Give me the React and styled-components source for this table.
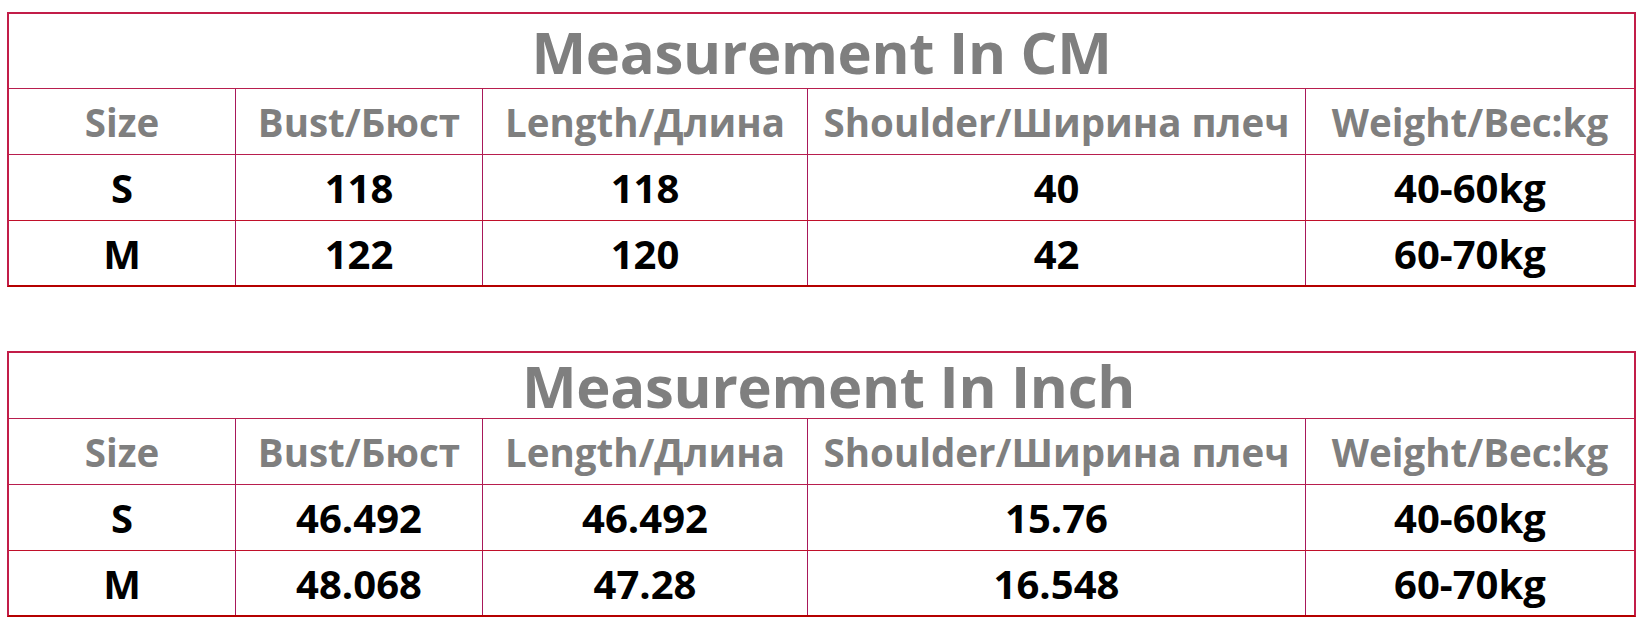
import React from "react";
import styled, { createGlobalStyle } from "styled-components";

const GlobalStyle = createGlobalStyle`
  body {
    margin: 0;
    background: #ffffff;
    font-family: "Open Sans", "Noto Sans", "Liberation Sans", sans-serif;
  }
`;

const Page = styled.div`
  display: flex;
  flex-direction: column;
  gap: 64px;
  padding: 12px 0 0 7px;
  width: 1629px;
`;

const Table = styled.div`
  border: 2px solid #c21d48;
  border-bottom: 2px solid #b50000;
  display: flex;
  flex-direction: column;
`;

const Title = styled.div`
  height: ${(p) => p.height}px;
  border-bottom: 1px solid #b81e4e;
  display: flex;
  align-items: center;
  justify-content: center;
  color: #7f7f7f;
  font-size: 58px;
  font-weight: 700;
  letter-spacing: -0.3px;
  padding-left: ${(p) => p.shift || 0}px;
`;

const Row = styled.div`
  display: grid;
  grid-template-columns: 226px 247px 325px 498px 1fr;
  height: ${(p) => p.height}px;
  border-bottom: ${(p) => (p.last ? "none" : `1px solid ${p.line}`)};
  color: ${(p) => (p.head ? "#7f7f7f" : "#000000")};
  font-size: ${(p) => (p.head ? 38.5 : 40)}px;
  font-weight: 700;
`;

const Cell = styled.div`
  display: flex;
  align-items: center;
  justify-content: center;
  white-space: nowrap;
  box-sizing: border-box;
  & + & {
    border-left: 1px solid #a8185a;
  }
`;

const headers = [
  "Size",
  "Bust/Бюст",
  "Length/Длина",
  "Shoulder/Ширина плеч",
  "Weight/Вес:kg",
];

const tables = [
  {
    title: "Measurement In CM",
    titleHeight: 74,
    shift: 0,
    rows: [
      ["S", "118", "118", "40", "40-60kg"],
      ["M", "122", "120", "42", "60-70kg"],
    ],
  },
  {
    title: "Measurement In Inch",
    titleHeight: 65,
    shift: 14,
    rows: [
      ["S", "46.492", "46.492", "15.76", "40-60kg"],
      ["M", "48.068", "47.28", "16.548", "60-70kg"],
    ],
  },
];

const SizeTable = ({ title, titleHeight, shift, rows }) => (
  <Table>
    <Title height={titleHeight} shift={shift}>
      {title}
    </Title>
    <Row head height={65} line="#b81e4e">
      {headers.map((h) => (
        <Cell key={h}>{h}</Cell>
      ))}
    </Row>
    {rows.map((r, i) => (
      <Row
        key={r[0]}
        height={i === rows.length - 1 ? 64 : 65}
        last={i === rows.length - 1}
        line="#c0102a"
      >
        {r.map((v, j) => (
          <Cell key={j}>{v}</Cell>
        ))}
      </Row>
    ))}
  </Table>
);

export default function App() {
  return (
    <>
      <GlobalStyle />
      <Page>
        {tables.map((t) => (
          <SizeTable key={t.title} {...t} />
        ))}
      </Page>
    </>
  );
}
